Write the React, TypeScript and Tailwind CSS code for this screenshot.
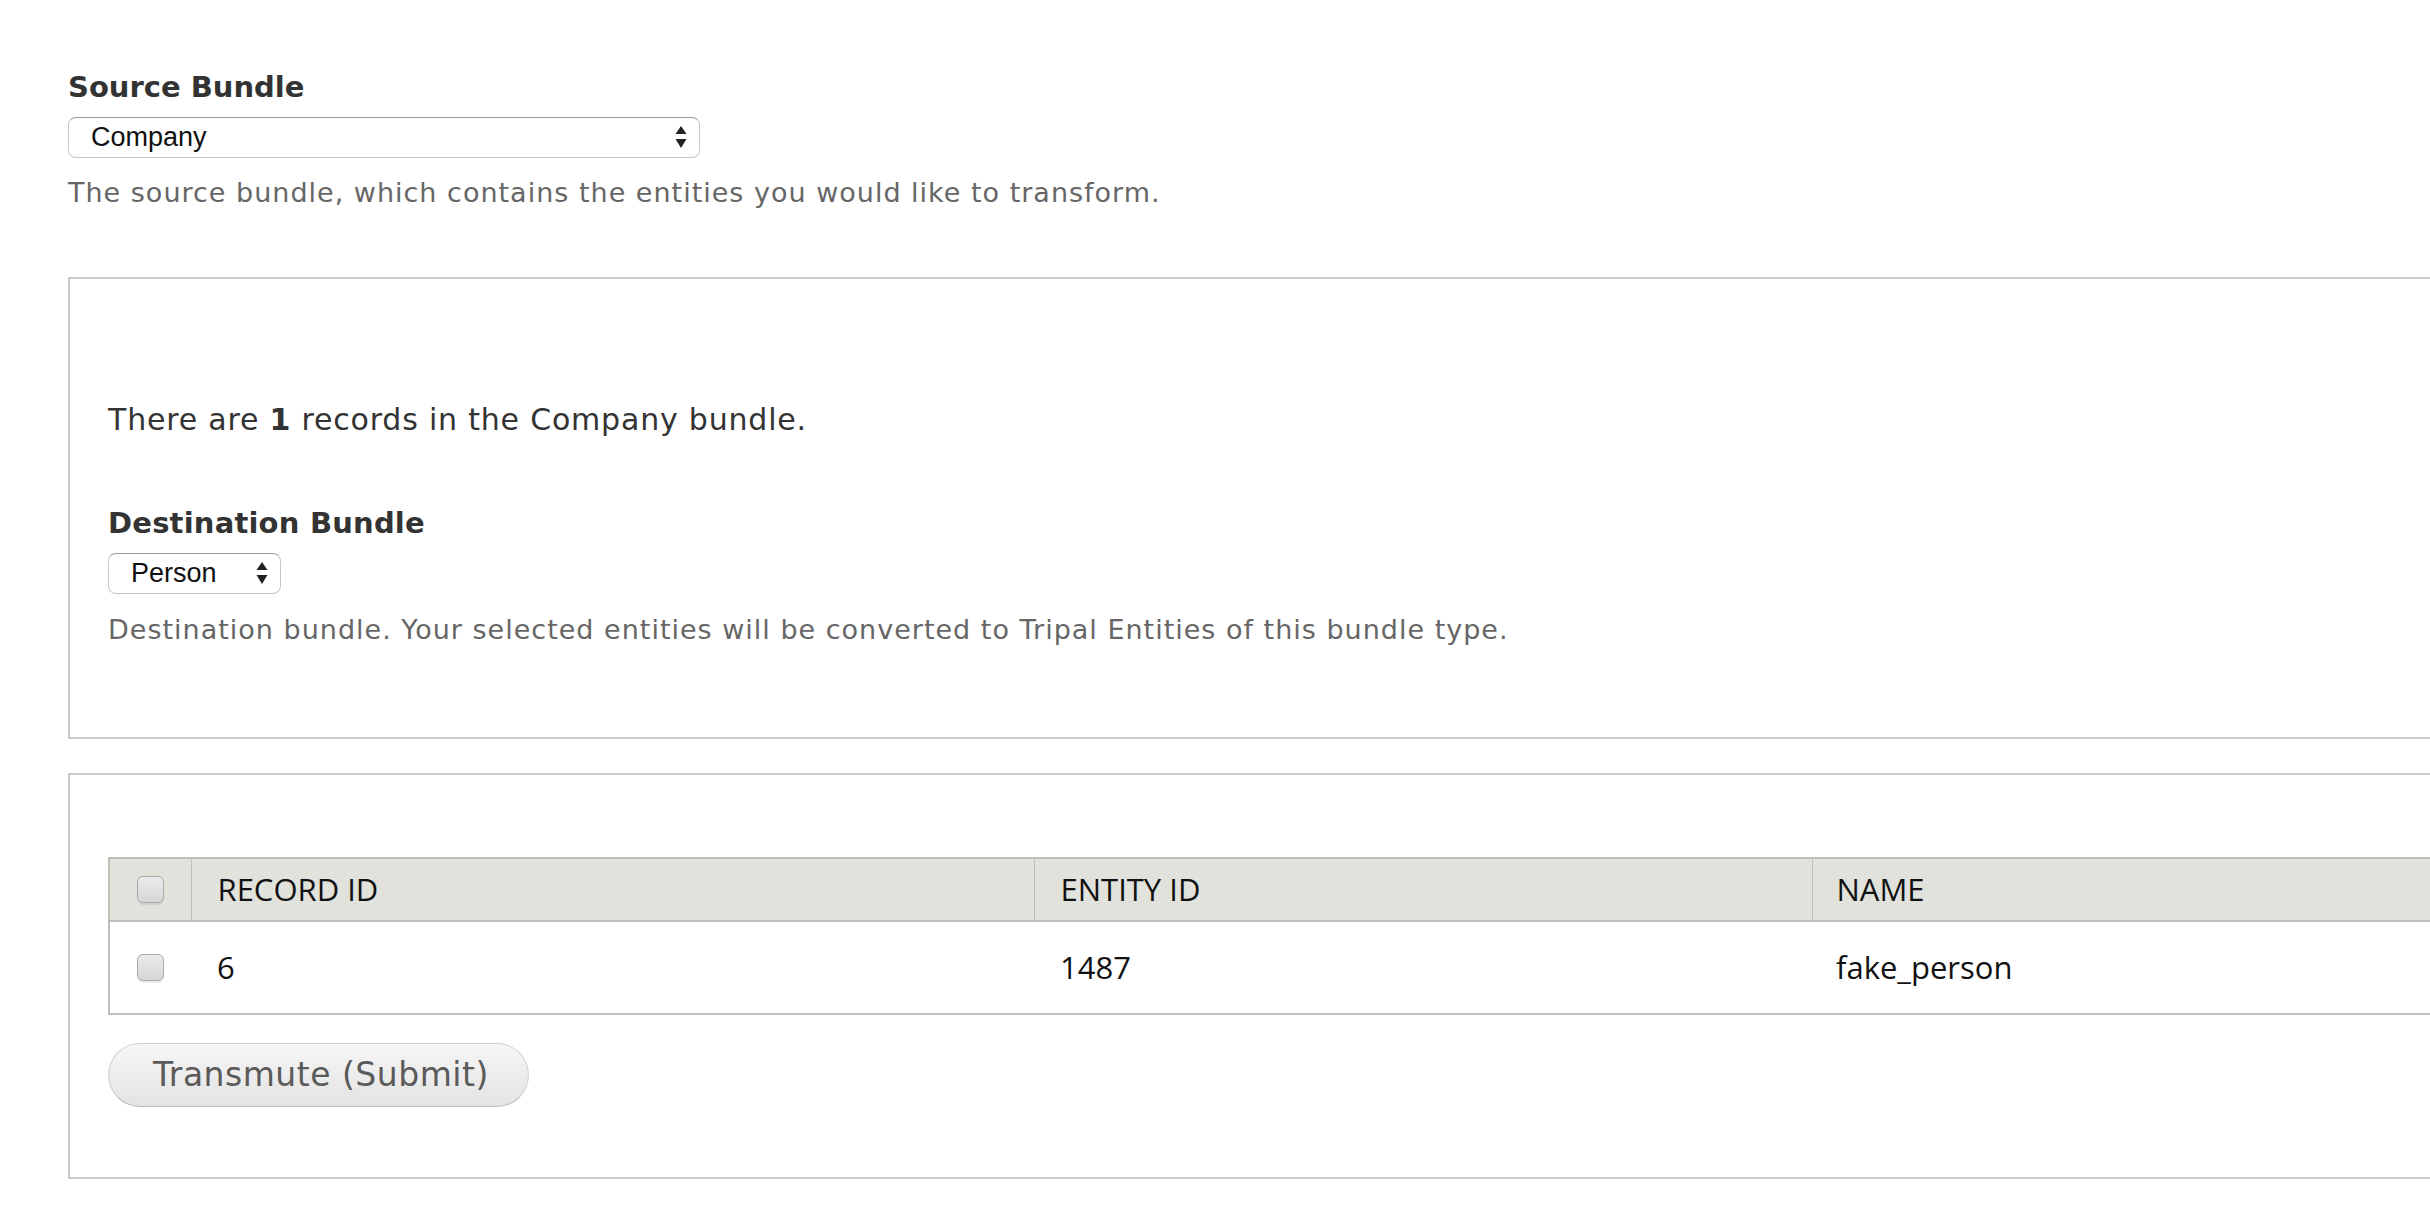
const rows = [{ recordId: "6", entityId: "1487", name: "fake_person" }];

function SelectArrows() {
  return (
    <svg width="12" height="24" viewBox="0 0 12 24" className="shrink-0">
      <path d="M6 0 L11.5 8 L0.5 8 Z" fill="#222" />
      <path d="M0.5 13 L11.5 13 L6 22 Z" fill="#222" />
    </svg>
  );
}

function FakeSelect({ value, width }: { value: string; width: string }) {
  return (
    <div
      className={`${width} flex h-[41px] items-center justify-between rounded-[8px] border border-[#c6c6c6] border-t-[#9c9c9c] bg-white pl-[22px] pr-[12px] font-['Liberation_Sans',Arial,sans-serif] text-[27px] text-[#111]`}
    >
      <span className="leading-none">{value}</span>
      <SelectArrows />
    </div>
  );
}

function Checkbox() {
  return (
    <div className="mx-auto h-[27px] w-[27px] rounded-[6px] border border-[#a9a9a9] bg-gradient-to-b from-[#ececec] to-[#d6d6d6] shadow-[0_2px_0_rgba(0,0,0,0.08)]" />
  );
}

export default function App() {
  return (
    <div className="h-[1212px] w-full overflow-hidden bg-white pl-[68px] pt-[69px] font-['DejaVu_Sans',sans-serif]">
      <label className="block text-[29px] font-bold leading-[36px] text-[#333]">Source Bundle</label>
      <div className="mt-[12px]">
        <FakeSelect value="Company" width="w-[632px]" />
      </div>
      <p className="mt-[17px] text-[27px] leading-[36px] tracking-[1px] text-[#666]">
        The source bundle, which contains the entities you would like to transform.
      </p>

      <fieldset className="mt-[66px] w-[2500px] border-2 border-[#cccccc] pb-[89px] pl-[38px] pt-[123px]">
        <p className="text-[30px] leading-[36px] tracking-[0.8px] text-[#333]">
          There are <strong>1</strong> records in the Company bundle.
        </p>
        <label className="mt-[67px] block text-[29px] font-bold leading-[36px] tracking-[0.2px] text-[#333]">
          Destination Bundle
        </label>
        <div className="mt-[12px]">
          <FakeSelect value="Person" width="w-[173px]" />
        </div>
        <p className="mt-[18px] text-[27px] leading-[36px] tracking-[1px] text-[#666]">
          Destination bundle. Your selected entities will be converted to Tripal Entities of this bundle type.
        </p>
      </fieldset>

      <fieldset className="mt-[34px] w-[2500px] border-2 border-[#cccccc] pb-[70px] pl-[38px] pt-[82px]">
        <table className="w-[2600px] table-fixed border-collapse font-['Open_Sans',sans-serif] text-[31px] text-[#111]">
          <colgroup>
            <col className="w-[82px]" />
            <col className="w-[843px]" />
            <col className="w-[778px]" />
            <col />
          </colgroup>
          <thead>
            <tr className="h-[63px] border-2 border-[#bebfb9] bg-[#e1e2dc]">
              <th className="border-r border-[#bebfb9] align-middle">
                <Checkbox />
              </th>
              <th className="border-r border-[#bebfb9] pl-[26px] text-left font-normal">RECORD ID</th>
              <th className="border-r border-[#bebfb9] pl-[26px] text-left font-normal">ENTITY ID</th>
              <th className="pl-[24px] text-left font-normal">NAME</th>
            </tr>
          </thead>
          <tbody>
            {rows.map((row) => (
              <tr key={row.recordId} className="h-[93px] border-2 border-[#bebfb9] bg-white">
                <td className="align-middle">
                  <Checkbox />
                </td>
                <td className="pl-[26px]">{row.recordId}</td>
                <td className="pl-[26px]">{row.entityId}</td>
                <td className="pl-[24px]">{row.name}</td>
              </tr>
            ))}
          </tbody>
        </table>

        <button
          type="button"
          className="mt-[28px] h-[64px] w-[421px] rounded-full border border-[#cfcfcf] border-b-[#b8b8b8] bg-gradient-to-b from-[#f6f6f6] to-[#e3e3e3] pl-[44px] text-left text-[33px] tracking-[0.5px] text-[#5a5a5a]"
        >
          Transmute (Submit)
        </button>
      </fieldset>
    </div>
  );
}
